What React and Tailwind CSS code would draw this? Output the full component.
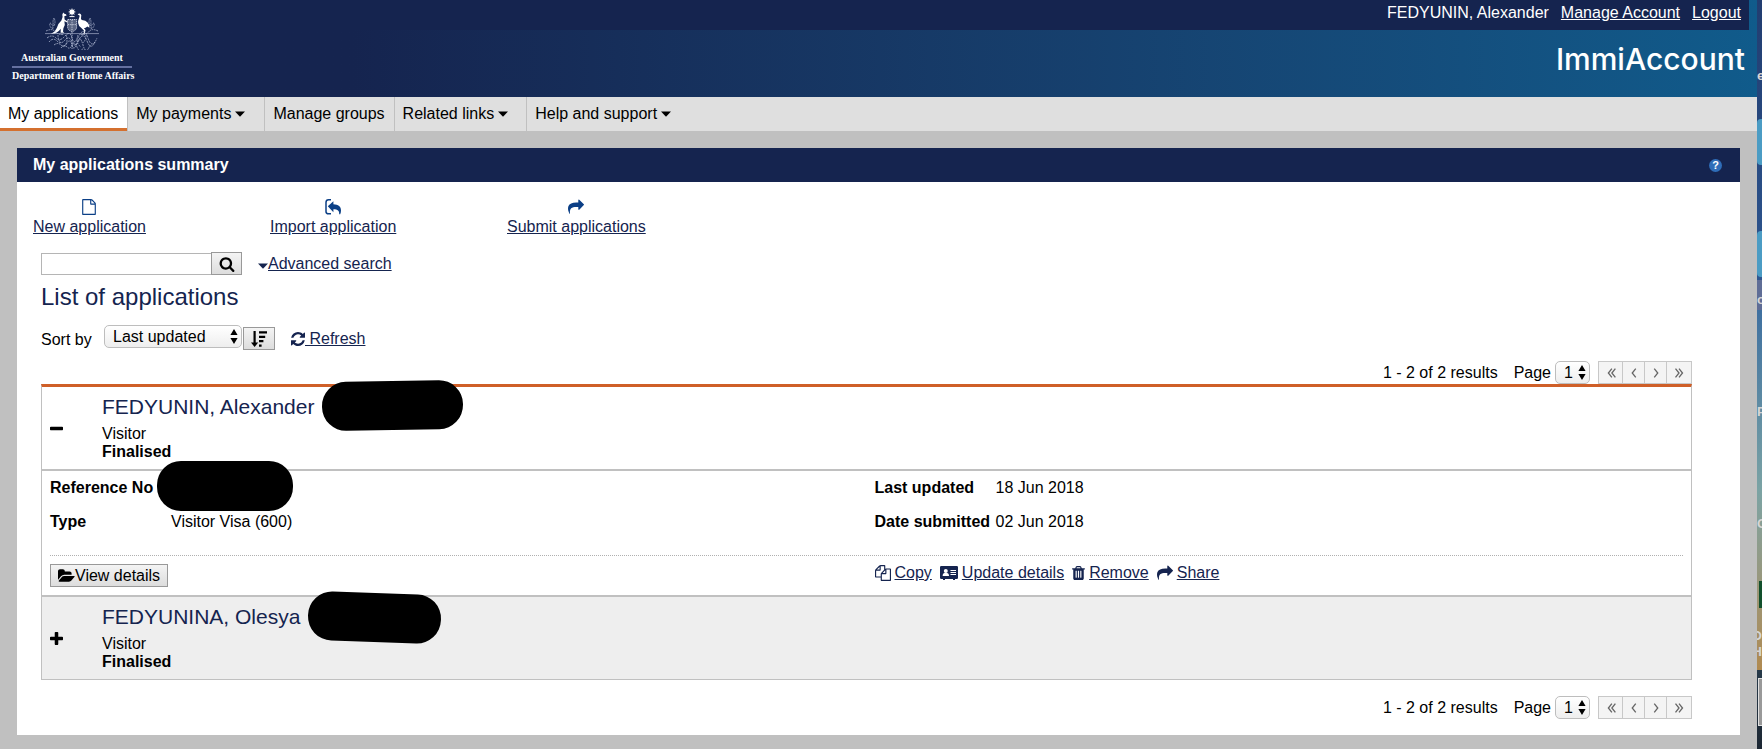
import React, { useState } from 'react';

const ICONS = {
  file: 'M1596 380q28 28 48 76t20 88v1152q0 40-28 68t-68 28h-1344q-40 0-68-28t-28-68v-1600q0-40 28-68t68-28h896q40 0 88 20t76 48zm-444-244v376h376q-10-29-22-41l-313-313q-12-12-41-22zm384 1528v-1024h-416q-40 0-68-28t-28-68v-416h-768v1536h1280z',
  copy: 'M1696 384q40 0 68 28t28 68v1216q0 40-28 68t-68 28h-960q-40 0-68-28t-28-68v-288h-544q-40 0-68-28t-28-68v-672q0-40 20-88t48-76l408-408q28-28 76-48t88-20h416q40 0 68 28t28 68v328q68-40 128-40h416zm-544 213l-299 299h299v-299zm-640-384l-299 299h299v-299zm196 647l316-316v-416h-384v416q0 40-28 68t-68 28h-416v640h512v-256q0-40 20-88t48-76zm956 804v-1152h-384v416q0 40-28 68t-68 28h-416v640h896z',
  share: 'M1792 640q0 26-19 45l-512 512q-19 19-45 19t-45-19-19-45v-256h-224q-98 0-175.5 6t-154 21.5-133 42.5-105.5 69.5-80 101-48.5 138.5-17.5 181q0 55 5 123 0 6 2.5 23.5t2.5 26.5q0 15-8.5 25t-23.5 10q-16 0-28-17-7-9-13-22t-13.5-30-10.5-24q-127-285-127-451 0-199 53-333 162-403 875-403h224v-256q0-26 19-45t45-19 45 19l512 512q19 19 19 45z',
  refresh: 'M1639 1056q0 5-1 7-64 268-268 434.5t-478 166.5q-146 0-282.5-55t-243.5-157l-129 129q-19 19-45 19t-45-19-19-45v-448q0-26 19-45t45-19h448q26 0 45 19t19 45-19 45l-137 137q71 66 161 102t187 36q134 0 250-65t186-179q11-17 53-117 8-23 30-23h192q13 0 22.5 9.5t9.5 22.5zm25-800v448q0 26-19 45t-45 19h-448q-26 0-45-19t-19-45 19-45l138-138q-148-137-349-137-134 0-250 65t-186 179q-11 17-53 117-8 23-30 23h-199q-13 0-22.5-9.5t-9.5-22.5v-7q65-268 270-434.5t480-166.5q146 0 284 55.5t245 156.5l130-129q19-19 45-19t45 19 19 45z',
  search: 'M1216 832q0-185-131.5-316.5t-316.5-131.5-316.5 131.5-131.5 316.5 131.5 316.5 316.5 131.5 316.5-131.5 131.5-316.5zm512 832q0 52-38 90t-90 38q-54 0-90-38l-343-342q-179 124-399 124-143 0-273.5-55.5t-225-150-150-225-55.5-273.5 55.5-273.5 150-225 225-150 273.5-55.5 273.5 55.5 225 150 150 225 55.5 273.5q0 220-124 399l343 343q37 37 37 90z',
  plus: 'M1600 736v192q0 40-28 68t-68 28h-416v416q0 40-28 68t-68 28h-192q-40 0-68-28t-28-68v-416h-416q-40 0-68-28t-28-68v-192q0-40 28-68t68-28h416v-416q0-40 28-68t68-28h192q40 0 68 28t28 68v416h416q40 0 68 28t28 68z',
  minus: 'M1600 736v192q0 40-28 68t-68 28h-1216q-40 0-68-28t-28-68v-192q0-40 28-68t68-28h1216q40 0 68 28t28 68z',
  trash: 'M704 1376v-704q0-14-9-23t-23-9h-64q-14 0-23 9t-9 23v704q0 14 9 23t23 9h64q14 0 23-9t9-23zm256 0v-704q0-14-9-23t-23-9h-64q-14 0-23 9t-9 23v704q0 14 9 23t23 9h64q14 0 23-9t9-23zm256 0v-704q0-14-9-23t-23-9h-64q-14 0-23 9t-9 23v704q0 14 9 23t23 9h64q14 0 23-9t9-23zm-544-992h448l-48-117q-7-9-17-11h-317q-10 2-17 11zm928 32v64q0 14-9 23t-23 9h-96v948q0 83-47 143.5t-113 60.5h-832q-66 0-113-58.5t-47-141.5v-952h-96q-14 0-23-9t-9-23v-64q0-14 9-23t23-9h309l70-167q15-37 54-63t79-26h320q40 0 79 26t54 63l70 167h309q14 0 23 9t9 23z',
  folder: 'M1879 952q0 31-31 66l-336 396q-43 51-120.5 86.5t-143.5 35.5h-1088q-34 0-60.5-13t-26.5-43q0-31 31-66l336-396q43-51 120.5-86.5t143.5-35.5h1088q34 0 60.5 13t26.5 43zm-343-344v160h-832q-94 0-197 47.5t-164 119.5l-337 396-5 6q0-4-.5-12.5t-.5-12.5v-960q0-92 66-158t158-66h320q92 0 158 66t66 158v32h544q92 0 158 66t66 158z',
};

function Icon({ name, viewBox = '0 0 1792 1792', className = 'w-4 h-4' }) {
  return (
    <svg viewBox={viewBox} className={`shrink-0 ${className}`} fill="currentColor" aria-hidden="true">
      <path d={ICONS[name]} />
    </svg>
  );
}

function ImportIcon() {
  return (
    <svg viewBox="0 0 16 16" className="w-4 h-4 text-[#0b3f86]" fill="currentColor" aria-hidden="true">
      <path d="M6 .8H3.6Q1 .8 1 3.4v9q0 2.4 2.6 2.4H6" fill="none" stroke="currentColor" strokeWidth="1.5" />
      <path d="M2.8 7.2 8.4 2.2v3c5 .1 7.6 2.3 7.6 6.2 0 1.4-.3 2.7-.8 3.9h-1c.3-3.4-1.4-5.1-5.8-5.1v3z" />
    </svg>
  );
}

function SortIcon() {
  return (
    <svg viewBox="0 0 16 16" className="w-4 h-4" aria-hidden="true">
      <path d="M2.5 0h2.2v11.4h2.5L3.6 16 0 11.4h2.5z" />
      <path d="M8 1.4h8M8 5.8h6.2M8 10.2h4.4M8 14.6h2.6" stroke="currentColor" strokeWidth="2.2" />
    </svg>
  );
}

function CardIcon() {
  return (
    <svg viewBox="0 0 18 14" className="w-[18px] h-3.5 shrink-0" aria-hidden="true">
      <path d="M1.2 0h15.6Q18 0 18 1.2v10.6Q18 13 16.8 13H15v1h-2v-1H5v1H3v-1H1.2Q0 13 0 11.8V1.2Q0 0 1.2 0z" fill="currentColor" />
      <circle cx="5.8" cy="5" r="2" fill="#fff" />
      <path d="M2.6 10q0-3.2 3.2-3.2T9 10z" fill="#fff" />
      <path d="M10.5 4.5H16M10.5 6.5H16M10.5 8.5H16" stroke="#fff" />
    </svg>
  );
}

function Caret({ className = '' }) {
  return (
    <svg viewBox="0 0 10 6" className={`w-2.5 h-1.5 shrink-0 ${className}`} fill="currentColor" aria-hidden="true">
      <path d="M0 .4h10L5 5.8z" />
    </svg>
  );
}

function Crest() {
  return (
    <svg viewBox="0 0 56 42" className="w-14 h-[42px]" fill="#fff" aria-hidden="true">
      {/* star */}
      <path d="M28 0l.8 2 2-.8-.9 1.9 2 .9-2 .8.9 2-2-.9-.8 2-.8-2-2 .9.9-2-2-.8 2-.9-.9-1.9 2 .8z" />
      <path d="M25.5 8.6h5" stroke="#fff" strokeWidth="1" />
      {/* shield */}
      <path d="M23.6 11.5h9v7.6q0 3.2-4.5 4.6-4.5-1.4-4.5-4.6z" fillOpacity=".3" stroke="#cdd4e6" strokeWidth=".9" strokeDasharray="1.4 .7" />
      <path d="M28 12v11M24 16.6h8.2" stroke="#dfe4f0" strokeWidth=".8" strokeDasharray="1 .8" />
      {/* kangaroo */}
      <path d="M19.2 4.6l1.2 1.2 1.6.5.6 1.2-2.3.7.3 3.3 3.2 2.2-.6.8-2.8-1.2.4 3.8-1.4 3.2-.4 3.3 1.3 1.2h-3.7l.2-4-2 2.2-3.6 2.6-4.4.5 3.8-2.6 2.2-3.6 1.6-4 3-3.5 1.2-3.4-.3-2.3z" />
      {/* emu */}
      <path d="M33.6 6.6q1.4-1.6 3-.7 1.2 1 .5 3.2-.6 2.6.8 3 3.8.2 5.9 2.6 1.7 2 1.7 5.1l-2.2-1.3q-1.6 1.6-3.4 1.8l1.6 1.8-.8 4.2h-2.6l1.7-1.1.1-2.6-2.8-2.8q-2.6-1.8-3-4.8-.2-2.4.8-4.5.9-2 .6-2.9z" />
      {/* wattle */}
      <g fill="none" stroke="#b4bdd6" strokeWidth=".8">
        <path d="M1 25.6h54" strokeOpacity=".8" />
        <path d="M2 23q6-3 9 .5t9 3M54 23q-6-3-9 .5t-9 3" strokeDasharray="1.6 .8" />
        <path d="M9 21q-4-2-3-6 3 1 3 6zm1-3q-2-4 0-8 2 4 0 8M47 21q4-2 3-6-3 1-3 6zm-1-3q2-4 0-8-2 4 0 8" strokeDasharray="1.2 .6" />
        <path d="M3 30q5-4 9 0t9-2 7 2 7-2 9 2 9 0M5 34q4-5 8-1t8-1 7 2 7-2 8 1 8 1" strokeDasharray="2 .9" />
        <path d="M10 37q4-3 7 0t6-2 5 2 5-2 6 2 7 0M17 40q3-4 6-1t5-2 5 2 6 1" strokeDasharray="1.8 .8" />
        <path d="M28 24v17M22 27q3 8-3 12M34 27q-3 8 3 12M14 27q0 5 3 8M42 27q0 5-3 8" strokeDasharray="1.6 1" />
      </g>
    </svg>
  );
}

function Select({ id, options, className, label }) {
  return (
    <span className="relative inline-flex">
      <select
        id={id}
        aria-label={label}
        className={`appearance-none h-[23px] rounded-[5px] border border-[#bdbdbd] bg-linear-to-b from-white to-[#eeeeee] text-base leading-5 text-black ${className}`}
      >
        {options.map((o) => <option key={o}>{o}</option>)}
      </select>
      <svg viewBox="0 0 8 15" className="absolute right-1 top-1 w-2 h-[15px] pointer-events-none" aria-hidden="true">
        <path d="M4 0l3.6 6H.4zM4 15L.4 9h7.2z" />
      </svg>
    </span>
  );
}

function Pagination({ id }) {
  const pages = [
    ['First page', 'M9 3L5 8l4 5M13 3L9 8l4 5', 'w-[25px]'],
    ['Previous page', 'M10 3L6 8l4 5', 'w-[23px]'],
    ['Next page', 'M6 3l4 5-4 5', 'w-[23px]'],
    ['Last page', 'M4 3l4 5-4 5M8 3l4 5-4 5', 'w-[26px]'],
  ];
  return (
    <div className="flex items-center justify-end h-[23px]">
      <span>1 - 2 of 2 results</span>
      <label htmlFor={id} className="ml-4 mr-1">Page</label>
      <Select id={id} options={['1']} className="w-[35px] pl-2" />
      <div className="flex ml-2">
        {pages.map(([label, d, width]) => (
          <button
            key={label}
            aria-label={label}
            className={`h-[23px] -ml-px first:ml-0 flex items-center justify-center border border-[#c8c8c8] bg-[#f4f4f4] text-[#666666] ${width}`}
          >
            <svg viewBox="0 0 16 16" className="w-3.5 h-3.5" fill="none" stroke="currentColor" strokeWidth="1.5">
              <path d={d} />
            </svg>
          </button>
        ))}
      </div>
    </div>
  );
}

function Application({ name, open, onToggle, blot, children }) {
  return (
    <li className={open ? '' : 'bg-[#eeeeee]'}>
      <div className="flex items-center py-2">
        <button onClick={onToggle} aria-expanded={open} aria-label={`Toggle ${name}`} className="w-[60px] pl-2">
          <Icon name={open ? 'minus' : 'plus'} viewBox="192 128 1408 1408" className="w-[13px] h-[13px]" />
        </button>
        <div>
          <h3 className="relative w-fit mb-1.5 text-[21px] leading-6 text-[#15244f]">
            {name}
            {blot}
          </h3>
          <p>Visitor</p>
          <p className="font-bold">Finalised</p>
        </div>
      </div>
      {open && children}
    </li>
  );
}

function Action({ icon, children }) {
  return (
    <a href="#" className="flex items-center gap-1 text-[#15244f]">
      {icon}
      <span className="underline">{children}</span>
    </a>
  );
}

// slice of the desktop that shows beside the browser window
function DesktopEdge() {
  return (
    <div className="relative w-[5px] shrink-0 overflow-hidden bg-linear-to-b from-[#233f78] via-[#4f83a4] to-[#1c2733] text-[13px] leading-4 font-bold text-[#d5d5d5]" aria-hidden="true">
      <div className="absolute inset-x-0 top-0 h-[280px] bg-linear-to-b from-[#223d70] to-[#2d5690]" />
      <div className="absolute inset-x-0 top-[280px] h-[30px] bg-[#5f6d96]" />
      <div className="absolute inset-x-0 top-[310px] h-[360px] bg-linear-to-b from-[#3f70a0] via-[#7ba3a4] to-[#b08a50]" />
      <div className="absolute inset-x-0 top-[119px] h-[46px] rounded-l-sm bg-[#4b9cc4]" />
      <div className="absolute inset-x-0 top-[231px] h-[46px] rounded-l-sm bg-[#4b9cc4]" />
      <div className="absolute right-0 top-[581px] w-[3px] h-[27px] bg-[#12502c]" />
      <div className="absolute right-0 top-[678px] w-1 h-12 border border-r-0 border-[#e0e0e0] bg-[#999999]" />
      <span className="absolute left-0 top-[68px]">e</span>
      <span className="absolute left-0 top-[292px]">o</span>
      <span className="absolute left-0 top-[404px]">P</span>
      <span className="absolute left-0 top-[516px]">C</span>
      <span className="absolute right-0 top-[628px]">D</span>
      <span className="absolute right-0 top-[644px]">H</span>
    </div>
  );
}

export default function App() {
  const [openRows, setOpenRows] = useState({ alexander: true, olesya: false });
  const toggle = (key) => setOpenRows({ ...openRows, [key]: !openRows[key] });

  const tab = 'flex items-center border-r border-[#c0c0c0] pl-2';
  const shortcut = 'inline-flex flex-col items-center gap-[3px]';

  return (
    <div className="flex font-['Liberation_Sans',Arial,sans-serif] text-base leading-[18px] text-black">
      <div className="flex-1 min-w-0 bg-[#c0c0c0] pb-[15px]">
        <header className="flex h-[97px] bg-linear-to-r from-[#15244f] from-20% to-[#105b8b]">
          <div className="w-36 shrink-0 bg-[#15244f] pt-2 pl-3">
            <div className="flex w-[120px] flex-col items-center whitespace-nowrap font-['Liberation_Serif',serif] font-bold text-white">
              <Crest />
              <p className="text-[10px] leading-4">Australian Government</p>
              <p className="w-full border-t-2 border-[#6470a0] text-center text-[10px] leading-4">Department of Home Affairs</p>
            </div>
          </div>
          <div className="flex-1">
            <div className="mr-2 flex h-[30px] justify-end gap-3 bg-[#15244f] pt-1 pr-2 text-white">
              <span>FEDYUNIN, Alexander</span>
              <a href="#" className="underline">Manage Account</a>
              <a href="#" className="underline">Logout</a>
            </div>
            <h1 className="mt-[9px] mr-3 text-right font-[Inter,sans-serif] text-[30px] leading-10 font-medium text-white">ImmiAccount</h1>
          </div>
        </header>

        <nav className="flex h-[34px] bg-[#dfdfdf]">
          <a href="#" className="flex items-center border-b-3 border-[#d4702f] bg-white pt-0.5 pl-2 pr-[9px]">My applications</a>
          <button className={`${tab} gap-1 border-l pr-[19px]`}>My payments <Caret /></button>
          <a href="#" className={`${tab} pr-[9px]`}>Manage groups</a>
          <button className={`${tab} gap-1 pr-[18px]`}>Related links <Caret /></button>
          <button className="flex items-center gap-1 pl-2">Help and support <Caret /></button>
        </nav>

        <main className="mx-[17px] mt-[17px] bg-white">
          <div className="flex h-[34px] items-center justify-between bg-[#15244f] pl-4 pr-[18px] text-white">
            <h2 className="font-bold">My applications summary</h2>
            <button aria-label="Help" className="flex h-[13px] w-[13px] items-center justify-center rounded-full bg-[#2f6db8] text-[11px] leading-3 font-bold">?</button>
          </div>

          <div className="flex px-4 pt-[17px] text-[#15244f]">
            <div className="w-[237px]">
              <a href="#" className={shortcut}>
                <Icon name="file" className="w-4 h-4 text-[#0b3f86]" />
                <span className="underline">New application</span>
              </a>
            </div>
            <div className="w-[237px]">
              <a href="#" className={shortcut}>
                <ImportIcon />
                <span className="underline">Import application</span>
              </a>
            </div>
            <a href="#" className={shortcut}>
              <Icon name="share" className="w-4 h-4 text-[#0b3f86]" />
              <span className="underline">Submit applications</span>
            </a>
          </div>

          <div className="ml-6 mr-12 pt-4 pb-4">
            <form className="flex items-end" onSubmit={(e) => e.preventDefault()}>
              <input type="text" aria-label="Search applications" className="h-[22px] w-[170px] border border-r-0 border-[#b5b5b5] bg-white px-1" />
              <button aria-label="Search" className="flex h-[23px] w-[31px] items-center justify-center border border-[#999999] bg-linear-to-b from-[#f4f4f4] to-[#dddddd]">
                <Icon name="search" />
              </button>
              <a href="#" className="ml-4 flex items-center pb-0.5 text-[#15244f]">
                <Caret className="mt-1" />
                <span className="underline">Advanced search</span>
              </a>
            </form>

            <h2 className="mt-2 text-2xl leading-7 text-[#15244f]">List of applications</h2>

            <div className="mt-3.5 flex h-[25px] items-center">
              <label htmlFor="sort" className="w-[63px] pt-1">Sort by</label>
              <div className="self-start">
                <Select id="sort" options={['Last updated', 'Date submitted', 'Reference No']} className="w-[138px] pl-2" />
              </div>
              <button aria-label="Sort descending" className="ml-px flex h-[23px] w-8 items-center justify-center self-end border border-[#999999] bg-linear-to-b from-[#f4f4f4] to-[#dddddd]">
                <SortIcon />
              </button>
              <a href="#" className="ml-4 flex items-center pt-0.5 text-[#15244f]">
                <Icon name="refresh" viewBox="128 128 1536 1536" className="w-3.5 h-3.5" />
                <span className="whitespace-pre underline"> Refresh</span>
              </a>
            </div>

            <div className="mt-[11px]">
              <Pagination id="page-top" />
            </div>

            <ul className="mb-4 divide-y-2 divide-[#c0c0c0] border border-t-3 border-[#c0c0c0] border-t-[#cf5f28]">
              <Application
                name="FEDYUNIN, Alexander"
                open={openRows.alexander}
                onToggle={() => toggle('alexander')}
                blot={<span className="absolute left-full -top-3.5 ml-2 h-[49px] w-[141px] -rotate-1 rounded-[24px] bg-black" />}
              >
                <div className="border-t-2 border-[#c0c0c0]">
                  <dl className="grid grid-cols-2 gap-y-4 pt-2 pb-6">
                    <div className="flex px-2">
                      <dt className="w-[121px] shrink-0 font-bold">Reference No</dt>
                      <dd className="relative">
                        <span className="absolute -left-3.5 -top-[18px] h-[50px] w-[136px] rounded-[24px] bg-black" />
                      </dd>
                    </div>
                    <div className="flex px-2">
                      <dt className="w-[121px] shrink-0 font-bold">Last updated</dt>
                      <dd>18 Jun 2018</dd>
                    </div>
                    <div className="flex px-2">
                      <dt className="w-[121px] shrink-0 font-bold">Type</dt>
                      <dd>Visitor Visa (600)</dd>
                    </div>
                    <div className="flex px-2">
                      <dt className="w-[121px] shrink-0 font-bold">Date submitted</dt>
                      <dd>02 Jun 2018</dd>
                    </div>
                  </dl>
                  <div className="mx-2 border-t border-dotted border-[#b0b0b0]" />
                  <div className="grid grid-cols-2 pt-2 pb-2">
                    <div className="px-2">
                      <button className="flex h-[23px] items-center border border-[#999999] bg-linear-to-b from-[#f4f4f4] to-[#dddddd] px-[7px]">
                        <Icon name="folder" viewBox="0 0 1920 1792" className="h-4 w-[17px]" />
                        View details
                      </button>
                    </div>
                    <div className="flex items-start gap-2 px-2">
                      <Action icon={<Icon name="copy" />}>Copy</Action>
                      <Action icon={<CardIcon />}>Update details</Action>
                      <Action icon={<Icon name="trash" viewBox="192 128 1408 1536" className="w-[13px] h-3.5" />}>Remove</Action>
                      <Action icon={<Icon name="share" />}>Share</Action>
                    </div>
                  </div>
                </div>
              </Application>
              <Application
                name="FEDYUNINA, Olesya"
                open={openRows.olesya}
                onToggle={() => toggle('olesya')}
                blot={<span className="absolute left-full -top-3 ml-2 h-[49px] w-[133px] rotate-2 rounded-[24px] bg-black" />}
              />
            </ul>

            <Pagination id="page-bottom" />
          </div>
        </main>
      </div>
      <DesktopEdge />
    </div>
  );
}
